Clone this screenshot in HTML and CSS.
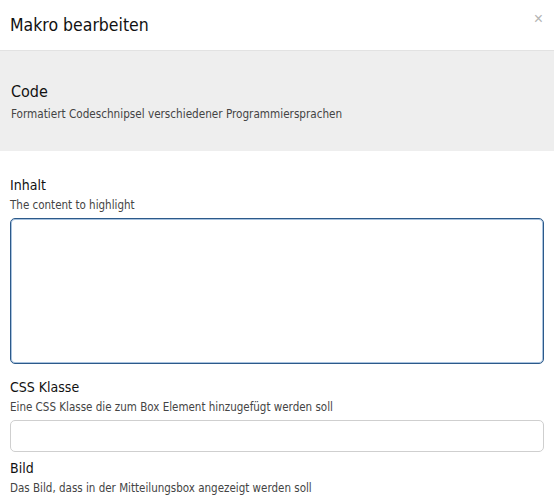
FILE: index.html
```html
<!DOCTYPE html>
<html lang="de">

<head>
    <meta charset="utf-8">
    <meta name="viewport" content="width=device-width, initial-scale=1.0">
    <title>Makro bearbeiten</title>
    <link rel="stylesheet" href="styles.css">
</head>

<body>
    <div class="dialog">
        <header class="kopf">
            <h1>Makro bearbeiten</h1>
            <button class="luk" aria-label="Schließen">&times;</button>
        </header>
        <section class="makro">
            <h2>Code</h2>
            <p>Formatiert Codeschnipsel verschiedener Programmiersprachen</p>
        </section>
        <form class="felter">
            <div class="felt">
                <label for="inhalt">Inhalt</label>
                <p class="hjaelp">The content to highlight</p>
                <textarea id="inhalt" class="aktiv"></textarea>
            </div>
            <div class="felt kort">
                <label for="klasse">CSS Klasse</label>
                <p class="hjaelp">Eine CSS Klasse die zum Box Element hinzugefügt werden soll</p>
                <input id="klasse" type="text">
            </div>
            <div class="felt">
                <label for="bild">Bild</label>
                <p class="hjaelp">Das Bild, dass in der Mitteilungsbox angezeigt werden soll</p>
            </div>
        </form>
    </div>
</body>

</html>
```

FILE: styles.css
```css
body {
    margin: 0;
    background-color: #fff;
    font-family: "DejaVu Sans Condensed", "DejaVu Sans", sans-serif;
    color: #111;
}

.dialog {
    width: 554px;
    overflow: hidden;
}

.kopf {
    display: flex;
    justify-content: space-between;
    align-items: center;
    height: 50px;
    padding: 0 10px;
    border-bottom: 1px solid #e2e2e2;
}

h1 {
    margin: 0;
    font-size: 17.5px;
    font-weight: normal;
}

.luk {
    border: none;
    background: none;
    color: #b5b5b5;
    font-size: 16px;
    padding: 0;
    margin-top: -12px;
    margin-right: 1px;
}

.makro {
    background-color: #eeeeee;
    height: 100px;
    padding: 0 10px;
    display: flex;
    flex-direction: column;
    justify-content: center;
}

h2 {
    margin: 0 0 6px 1px;
    font-size: 16px;
    font-weight: normal;
}

.makro p {
    margin: 0 0 0 1px;
    font-size: 11.65px;
    color: #444;
}

.felter {
    padding: 26px 10px 0 10px;
}

.felt {
    margin-bottom: 15px;
}

.felt.kort {
    margin-bottom: 8px;
}

label {
    display: block;
    font-size: 14px;
}

.hjaelp {
    margin: 5px 0 6px;
    font-size: 11.5px;
    color: #444;
}

textarea,
input {
    display: block;
    box-sizing: border-box;
    width: 534px;
    border: 1px solid #cfcfcf;
    border-radius: 5px;
    font: inherit;
    resize: none;
}

textarea {
    height: 146px;
}

input {
    height: 32px;
}

/* feltet der har fokus */
.aktiv {
    border-color: #2c5a8a;
    box-shadow: inset 0 0 0 1px #a9c3df;
}
```
